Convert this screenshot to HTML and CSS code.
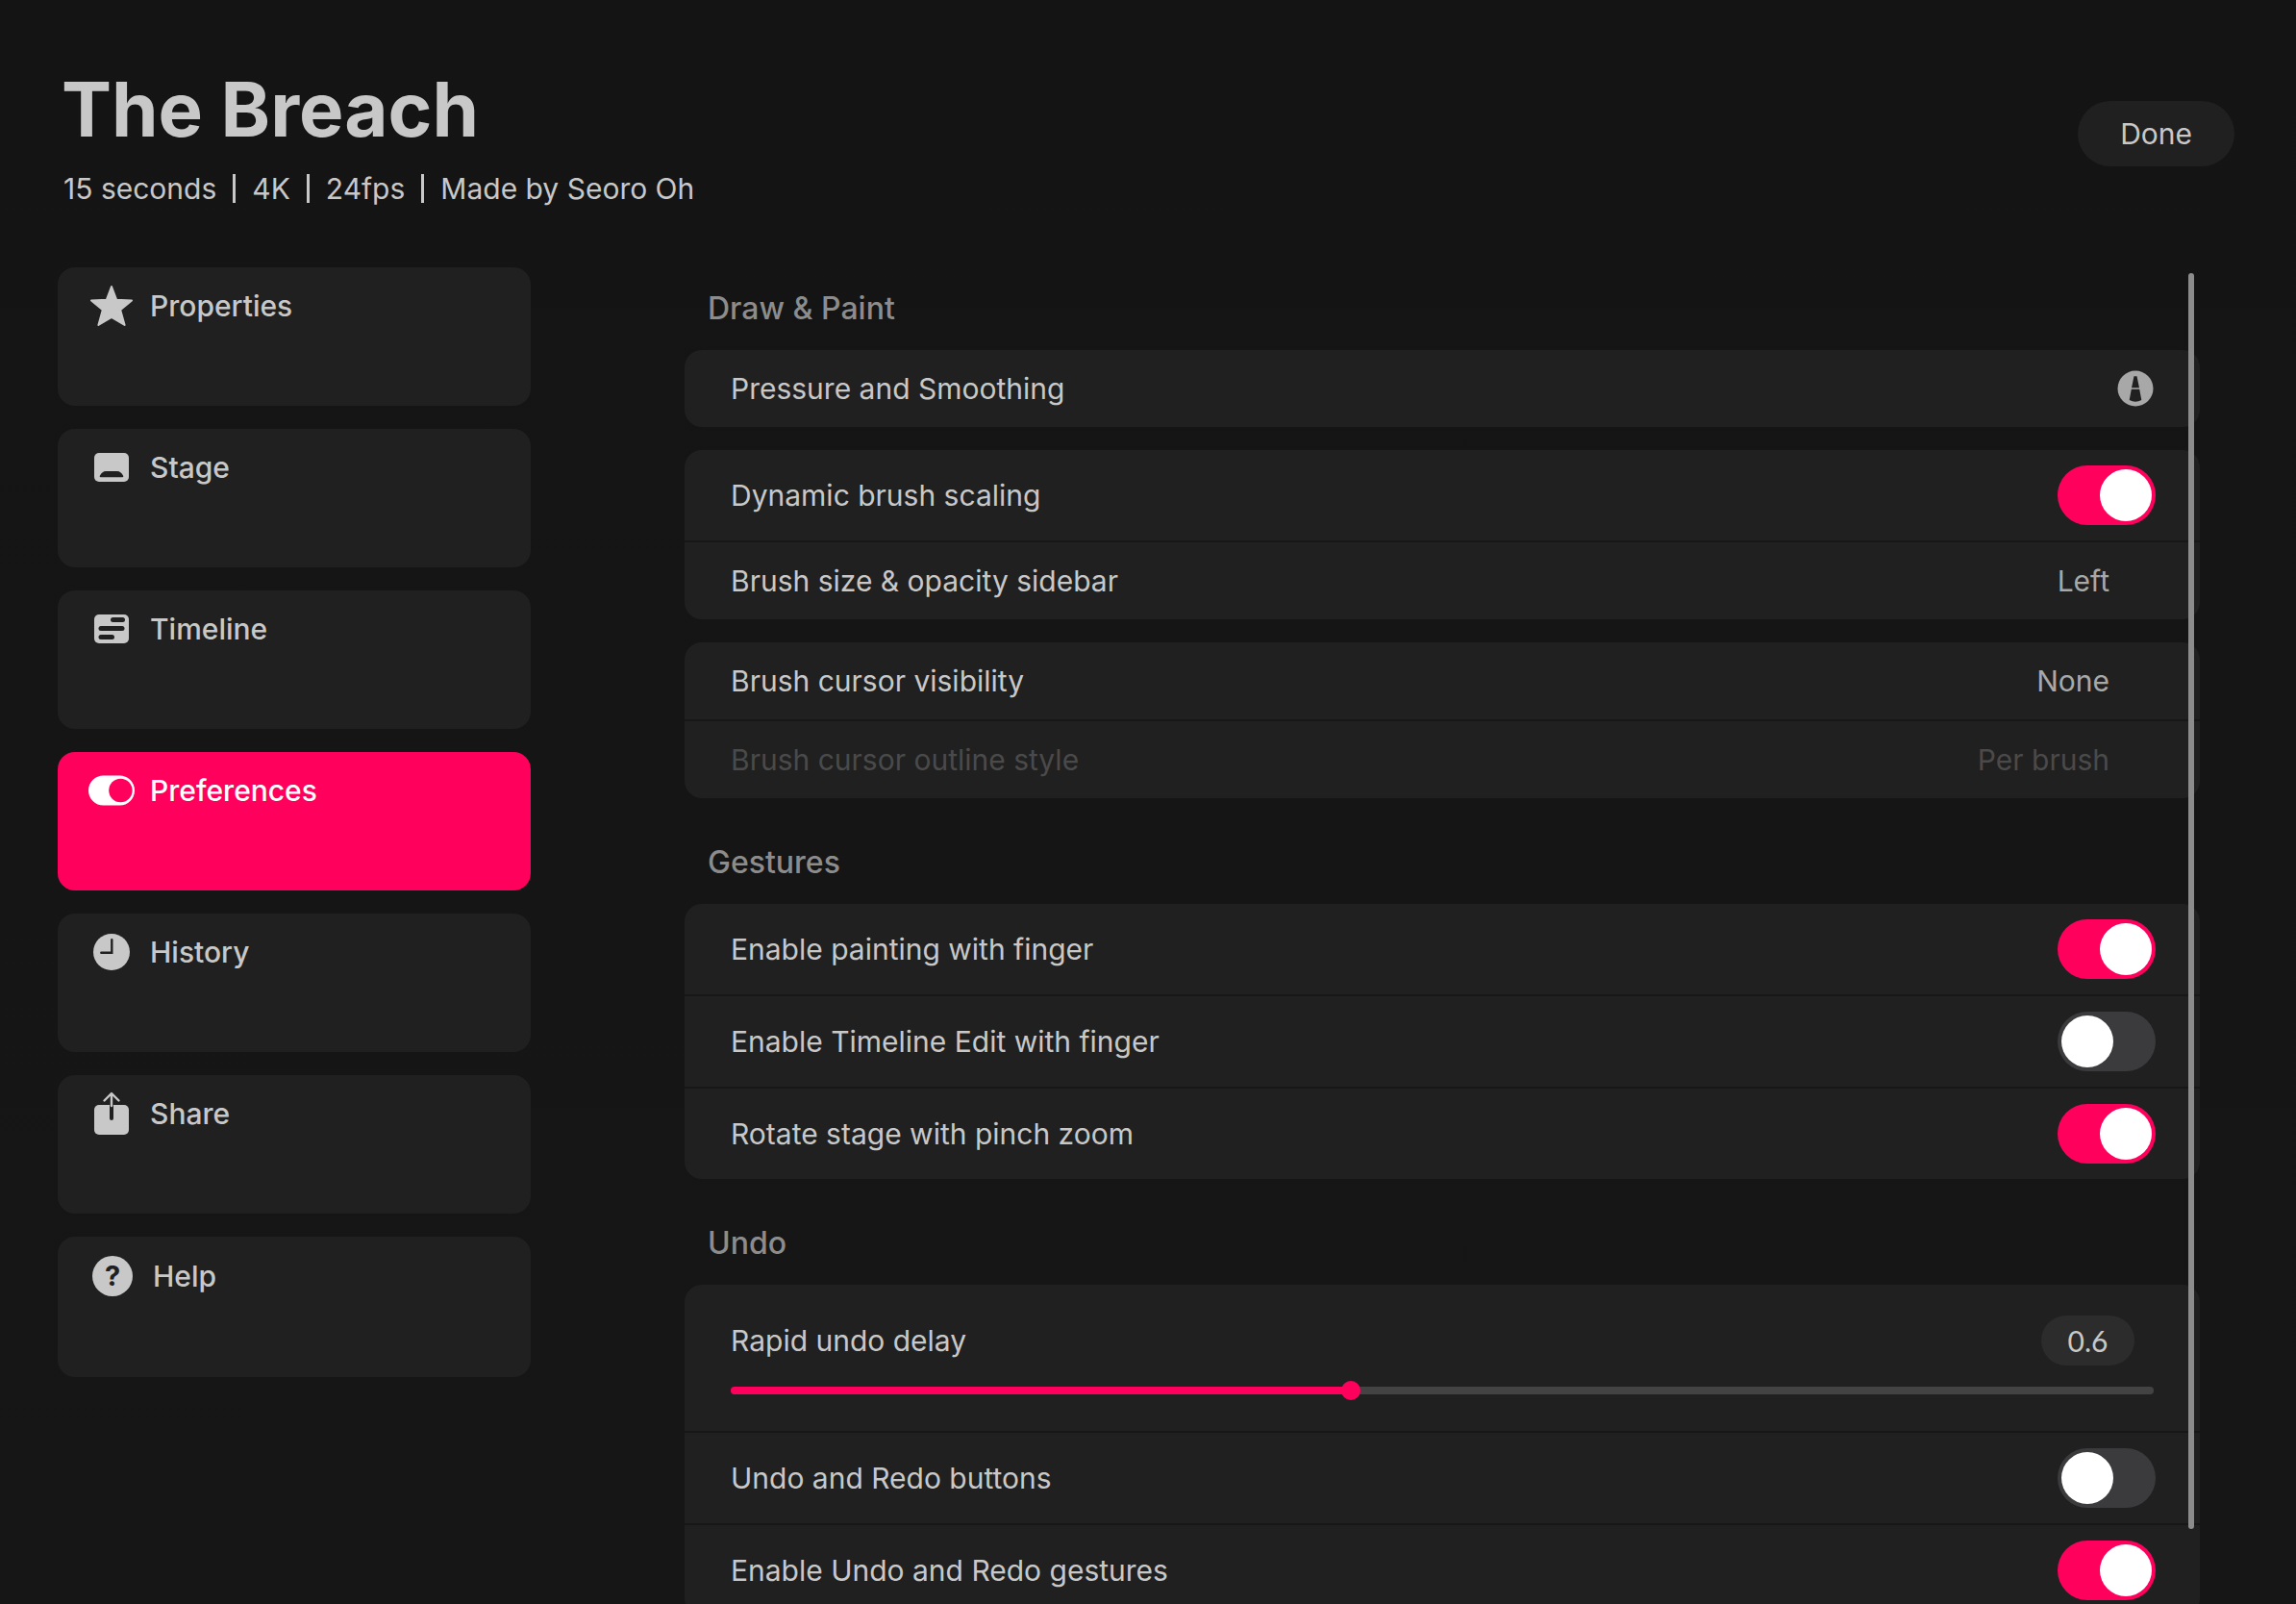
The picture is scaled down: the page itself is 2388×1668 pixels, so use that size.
FILE: index.html
```html
<!DOCTYPE html>
<html lang="en">

<head>
    <meta charset="UTF-8">
    <meta name="viewport" content="width=device-width, initial-scale=1.0">
    <title>The Breach - Preferences</title>
    <link rel="stylesheet" href="styles.css">
</head>

<body>
    <header class="header">
        <div>
            <h1 class="title">The Breach</h1>
            <p class="meta">
                <span>15 seconds</span>
                <i class="bar"></i>
                <span>4K</span>
                <i class="bar"></i>
                <span>24fps</span>
                <i class="bar"></i>
                <span>Made by Seoro Oh</span>
            </p>
        </div>
        <button class="done" type="button">Done</button>
    </header>

    <main class="main">
        <nav class="sidebar">
            <a class="nav-item" href="#properties">
                <svg class="nav-icon" viewBox="0 0 48 48">
                    <path d="M24 4L29.2 17.8L45 18.4L33.2 28.2L37.6 44L24 35.8L10.4 44L14.8 28.2L3 18.4L18.8 17.8Z" fill="currentColor" stroke="currentColor" stroke-width="2" stroke-linejoin="round" />
                </svg>
                Properties
            </a>
            <a class="nav-item" href="#stage">
                <svg class="nav-icon" viewBox="0 0 48 48">
                    <rect x="6" y="9" width="36" height="30" rx="5" fill="currentColor" />
                    <path class="cut" d="M12.6 34.3Q11 34.3 12 32.6Q14.4 28 18 28H30Q33.6 28 36 32.6Q37 34.3 35.4 34.3Z" />
                </svg>
                Stage
            </a>
            <a class="nav-item" href="#timeline">
                <svg class="nav-icon" viewBox="0 0 48 48">
                    <rect x="6" y="9" width="36" height="30" rx="5" fill="currentColor" />
                    <rect class="cut" x="23" y="12" width="15" height="5" rx="2.5" />
                    <rect class="cut" x="10.5" y="21" width="27" height="5" rx="2.5" />
                    <rect class="cut" x="10.5" y="30" width="16.5" height="5" rx="2.5" />
                </svg>
                Timeline
            </a>
            <a class="nav-item active" href="#preferences" aria-current="page">
                <svg class="nav-icon" viewBox="0 0 48 48">
                    <rect x="0" y="8.5" width="48" height="31" rx="15.5" fill="currentColor" />
                    <circle class="cut" cx="33.4" cy="24" r="12.2" />
                </svg>
                Preferences
            </a>
            <a class="nav-item" href="#history">
                <svg class="nav-icon" viewBox="0 0 48 48">
                    <circle cx="24" cy="24" r="19" fill="currentColor" />
                    <path class="cut-line" d="M24.3 11.3V24.8H13.3" stroke-width="2.4" />
                </svg>
                History
            </a>
            <a class="nav-item" href="#share">
                <svg class="nav-icon" viewBox="0 0 48 48">
                    <rect x="6" y="15" width="36" height="31" rx="5" fill="currentColor" />
                    <path class="cut-line" d="M24 16V29" stroke-width="4" />
                    <path d="M24 16V3.5M16.5 10.5L24 3L31.5 10.5" fill="none" stroke="currentColor" stroke-width="2.4" stroke-linecap="round" stroke-linejoin="round" />
                </svg>
                Share
            </a>
            <a class="nav-item" href="#help">
                <svg class="nav-icon" viewBox="0 0 48 48">
                    <circle cx="24" cy="24" r="21" fill="currentColor" />
                    <text class="cut" x="24" y="34" text-anchor="middle" font-size="29" font-weight="700">?</text>
                </svg>
                Help
            </a>
        </nav>

        <div class="panel">
            <form class="settings">
                <section class="group">
                    <h2 class="group-title">Draw &amp; Paint</h2>
                    <div class="card">
                        <div class="row">
                            <span id="pressure">Pressure and Smoothing</span>
                            <button class="icon-btn" type="button" aria-labelledby="pressure">
                                <svg viewBox="0 0 42 42">
                                    <circle cx="21" cy="21" r="18.5" fill="currentColor" />
                                    <path class="cut" d="M19.5 8.3H22.5L25 20.3H17ZM16.8 21.7H25.2L27.3 33Q21 36.6 14.7 33Z" />
                                </svg>
                            </button>
                        </div>
                    </div>
                    <div class="card">
                        <div class="row tall">
                            <label for="scaling">Dynamic brush scaling</label>
                            <input class="switch" type="checkbox" id="scaling" checked>
                        </div>
                        <div class="row">
                            <label for="sidebar-side">Brush size &amp; opacity sidebar</label>
                            <select class="value" id="sidebar-side">
                                <option>Left</option>
                            </select>
                        </div>
                    </div>
                    <div class="card">
                        <div class="row">
                            <label for="cursor">Brush cursor visibility</label>
                            <select class="value" id="cursor">
                                <option>None</option>
                            </select>
                        </div>
                        <div class="row disabled">
                            <label for="outline">Brush cursor outline style</label>
                            <select class="value" id="outline" disabled>
                                <option>Per brush</option>
                            </select>
                        </div>
                    </div>
                </section>

                <section class="group">
                    <h2 class="group-title">Gestures</h2>
                    <div class="card">
                        <div class="row tall">
                            <label for="finger-paint">Enable painting with finger</label>
                            <input class="switch" type="checkbox" id="finger-paint" checked>
                        </div>
                        <div class="row tall">
                            <label for="finger-timeline">Enable Timeline Edit with finger</label>
                            <input class="switch" type="checkbox" id="finger-timeline">
                        </div>
                        <div class="row tall">
                            <label for="rotate">Rotate stage with pinch zoom</label>
                            <input class="switch" type="checkbox" id="rotate" checked>
                        </div>
                    </div>
                </section>

                <section class="group">
                    <h2 class="group-title">Undo</h2>
                    <div class="card">
                        <div class="row slider-row">
                            <div class="slider-head">
                                <label for="delay">Rapid undo delay</label>
                                <output class="pill" for="delay">0.6</output>
                            </div>
                            <input class="slider" type="range" id="delay" min="0.1" max="1.25" step="0.05" value="0.6" style="--fill: 43.4%">
                        </div>
                        <div class="row tall">
                            <label for="undo-buttons">Undo and Redo buttons</label>
                            <input class="switch" type="checkbox" id="undo-buttons">
                        </div>
                        <div class="row tall">
                            <label for="undo-gestures">Enable Undo and Redo gestures</label>
                            <input class="switch" type="checkbox" id="undo-gestures" checked>
                        </div>
                    </div>
                </section>
            </form>
            <div class="scroll-thumb"></div>
        </div>
    </main>
</body>

</html>
```
FILE: styles.css
```css
* {
    margin: 0;
    padding: 0;
    box-sizing: border-box;
}

:root {
    --bg: #141414;
    --card: #202020;
    --text: #c8c8c8;
    --pink: #ff005c;
}

body {
    display: flex;
    flex-direction: column;
    height: 100vh;
    overflow: hidden;
    background: linear-gradient(var(--bg), #161616);
    color: var(--text);
    font-family: Inter, "Liberation Sans", sans-serif;
    font-size: 30px;
    line-height: 40px;
}

button,
select,
input {
    font: inherit;
    color: inherit;
    border: none;
    background: none;
    appearance: none;
}

/* Header */
.header {
    display: flex;
    justify-content: space-between;
    align-items: flex-start;
    padding: 66px 64px 62px;
}

.title {
    font-size: 78px;
    line-height: 96px;
    font-weight: 700;
    margin-bottom: 14px;
}

.meta {
    display: flex;
    align-items: center;
    gap: 17px;
    padding-left: 2px;
}

.bar {
    width: 3px;
    height: 30px;
    background: var(--text);
}

.done {
    margin-top: 39px;
    padding: 14px 44px;
    border-radius: 34px;
    background: var(--card);
}

/* Layout */
.main {
    display: grid;
    grid-template-columns: 492px minmax(0, 1fr);
    gap: 160px;
    flex: 1;
    min-height: 0;
    padding: 0 100px 0 60px;
}

/* Sidebar */
.sidebar {
    display: flex;
    flex-direction: column;
    gap: 24px;
}

.nav-item {
    display: flex;
    align-items: flex-start;
    gap: 16px;
    min-height: 144px;
    padding: 16px 32px;
    border-radius: 18px;
    background: var(--card);
    color: var(--text);
    font-weight: 500;
    line-height: 48px;
    text-decoration: none;
    --cut: var(--card);
}

.nav-item:last-child {
    gap: 18px;
    min-height: 146px;
    padding: 17px 33px;
}

.nav-item.active {
    background: var(--pink);
    color: #fff;
    --cut: var(--pink);
}

.nav-icon {
    width: 48px;
    height: 48px;
}

.cut {
    fill: var(--cut);
}

.cut-line {
    fill: none;
    stroke: var(--cut);
    stroke-linecap: round;
}

/* Settings */
.panel {
    position: relative;
    min-height: 0;
}

.settings {
    height: 100%;
    overflow-y: auto;
    scrollbar-width: none;
}

.scroll-thumb {
    position: absolute;
    top: 6px;
    right: 6px;
    bottom: 78px;
    width: 6px;
    border-radius: 3px;
    background: #8c8c8c;
}

.group + .group,
.card + .card {
    margin-top: 24px;
}

.group-title {
    padding: 23px 24px;
    font-size: 32px;
    line-height: 40px;
    font-weight: 500;
    color: #8c8c8c;
}

.card {
    border-radius: 18px;
    background: var(--card);
    --cut: var(--card);
}

.row {
    display: flex;
    justify-content: space-between;
    align-items: center;
    min-height: 80px;
    padding: 0 46px 0 48px;
}

.row.tall {
    min-height: 94px;
}

.row + .row {
    border-top: 2px solid #171717;
    min-height: 82px;
}

.row + .row.tall {
    min-height: 96px;
}

.row.disabled {
    color: #4a4a4a;
}

.value {
    padding-right: 48px;
    color: #a8a8a8;
    text-align: right;
}

.value:disabled {
    color: #4a4a4a;
    opacity: 1;
}

.icon-btn {
    width: 42px;
    height: 42px;
    color: #a8a8a8;
}

.icon-btn svg {
    display: block;
}

.switch {
    width: 102px;
    height: 62px;
    padding: 4px;
    border-radius: 31px;
    background: #3b3b3d;
}

.switch::before {
    content: "";
    display: block;
    width: 54px;
    height: 54px;
    border-radius: 50%;
    background: #fff;
}

.switch:checked {
    background: var(--pink);
}

.switch:checked::before {
    margin-left: auto;
}

.row.slider-row {
    flex-direction: column;
    align-items: stretch;
    gap: 16px;
    padding: 32px 48px;
}

.slider-head {
    display: flex;
    justify-content: space-between;
    align-items: center;
    padding-right: 20px;
}

.pill {
    min-width: 97px;
    border-radius: 26px;
    background: #2c2c2c;
    font-family: Lato, sans-serif;
    line-height: 52px;
    text-align: center;
}

.slider {
    display: block;
    width: 100%;
    height: 20px;
}

.slider::-webkit-slider-runnable-track {
    height: 8px;
    border-radius: 4px;
    background: linear-gradient(to right, var(--pink) var(--fill), #434343 var(--fill));
}

.slider::-webkit-slider-thumb {
    appearance: none;
    width: 20px;
    height: 20px;
    margin-top: -6px;
    border-radius: 50%;
    background: var(--pink);
}
```
